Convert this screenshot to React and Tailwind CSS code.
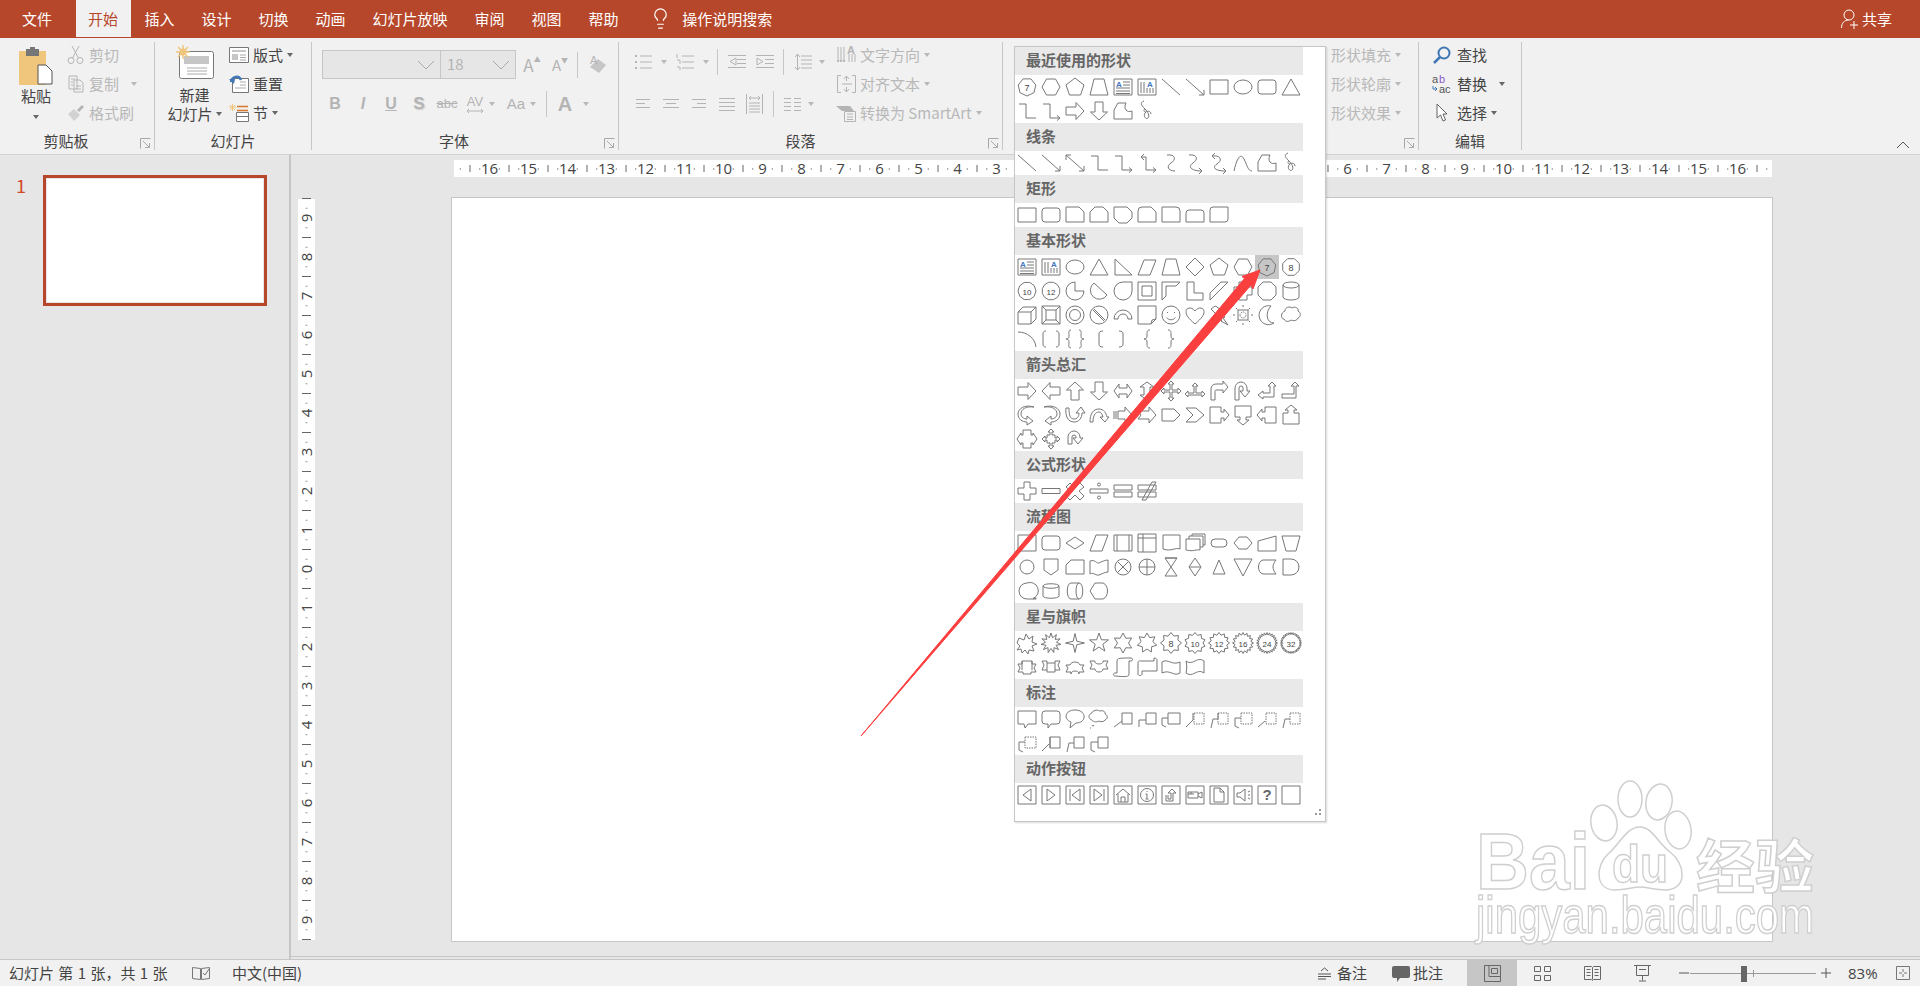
import React from "react";
import { Lightbulb } from "lucide-react";

// regular polygon / star paths for the shape gallery
const pt = (a, r) => `${(12 + r * Math.sin(a)).toFixed(2)} ${(12 - r * Math.cos(a)).toFixed(2)}`;
const reg = (n, R = 9) =>
  "M" + Array.from({ length: n }, (_, i) => pt(((i + 0.5) * 2 * Math.PI) / n, R)).join("L") + "z";
const star = (n, R = 9.5, r = 6) =>
  "M" +
  Array.from({ length: n * 2 }, (_, i) => pt((i * Math.PI) / n, i % 2 ? r : R)).join("L") +
  "z";

const ELL = "M3 12a9 7 0 1 0 18 0a9 7 0 1 0-18 0z";
const RECT = "M3 5h18v14H3z";
const RND = "M6 5h12a3 3 0 0 1 3 3v8a3 3 0 0 1-3 3H6a3 3 0 0 1-3-3V8a3 3 0 0 1 3-3z";
const TRI = "M12 4L21 20H3z";
const HEX = "M3 12L7.5 4h9L21 12l-4.5 8h-9z";
const PENT = "M12 3L21 10l-3.5 10h-11L3 10z";
const TRAP = "M3 20L7 4h10l4 16z";
const LINE = "M3 4L21 20";
const LINEA = "M3 4L21 20M21 15v5h-5";
const LINEB = "M3 4L21 20M21 15v5h-5M3 9V4h5";
const ELB = "M4 5h7v14h10";
const ELBA = "M4 5h7v14h10M18 16.5l3 2.500-3 2.500";
const ELBB = "M6 6h5v13h10M18 16.500l3 2.500-3 2.500M9 3L6 6l3 3";
const CUR = "M8 4c9-1 9 5 4 8s-3 8 4 8";
const CURA = "M6 4c9-1 9 5 4 8s-3 8 9 8M16 17l3 3-3 3";
const CURB = "M5 5c10-1 10 5 5 8s-3 7 9 7M16 17l3 3-3 3M8 2L5 5l3 3";
const WAVE = "M3 20C6 6 10 2 13 8s4 12 8 12";
const FREE = "M3 11L7 4h8c-3 6 1 10 6 8v8H3z";
const SCR = "M9 2c-5 2-2 5 1 8s5 7 3 9-5-2-3-5 6-2 6 1M10 10c-2 1-1 3 1 3";
const TB = { d: "M3 4h18v16H3zM12 7h7M12 10h7M5 13h14M5 16h14M5 18.500h14", a: [5, 11.500] };
const VTB = { d: "M3 4h18v16H3zM6 7v11M9 7v11M12 13v5M15 13v5M18 13v5", a: [12, 11.500] };
const ARW = {
  r: "M3 8h10V3.500L21 12l-8 8.500V16H3z",
  l: "M21 8H11V3.500L3 12l8 8.500V16h10z",
  u: "M8 21V11H3.500L12 3l8.500 8H16v10z",
  d: "M8 3v10H3.500L12 21l8.500-8H16V3z",
};
const RBOX = "M3 3h18v18H3z";

const RECENT = [
  { d: reg(7), t: "7" }, HEX, PENT, TRAP, TB, VTB, LINE, LINEA, RECT, ELL, RND, TRI,
  ELB, ELBA, ARW.r, ARW.d, FREE, SCR,
];
const LINES = [LINE, LINEA, LINEB, ELB, ELBA, ELBB, CUR, CURA, CURB, WAVE, FREE, SCR];
const RECTS = [
  RECT, RND, "M3 4h13l5 5v10H3z", "M8 4h8l5 5v10H3V9z", "M3 4h13l5 5v6l-5 5H8l-5-5z",
  "M3 19V8a4 4 0 0 1 4-4h9l5 5v10z", "M3 4h14a4 4 0 0 1 4 4v11H3z",
  "M6 7h12a3 3 0 0 1 3 3v9H3v-9a3 3 0 0 1 3-3z", "M3 19V7a3 3 0 0 1 3-3h15v12a3 3 0 0 1-3 3z",
];
const BASIC = [
  TB, VTB, ELL, TRI, "M4 4v16h17z", "M3 20L9 5h12l-6 15z", TRAP, "M12 3l9 9-9 9-9-9z", PENT, HEX,
  { d: reg(7), t: "7", hot: true }, { d: reg(8), t: "8" },
  { d: reg(10), t: "10" }, { d: reg(12), t: "12" }, "M12 3a9 9 0 1 0 9 9h-9z", "M7 4a9 9 0 1 0 13 12z",
  "M12 3h9v9a9 9 0 1 1-9-9z", "M3 3h18v18H3zM7 7h10v10H7z", "M3 21V3h18l-4 4H7v10z", "M4 3h7v11h9v7H4z",
  "M3 21v-7L14 3h7z", "M8 3h8v5h5v8h-5v5H8v-5H3V8h5z", "M8 3h8l5 5v8l-5 5H8l-5-5V8z",
  "M4 6a8 3 0 0 1 16 0v12a8 3 0 0 1-16 0zM4 6a8 3 0 0 0 16 0",
  "M3 9l5-5h13v12l-5 5H3zM3 9h13v12M16 9l5-5", "M3 3h18v18H3zM7 7h10v10H7zM3 3l4 4M21 3l-4 4M3 21l4-4M21 21l-4-4",
  "M3 12a9 9 0 1 0 18 0a9 9 0 1 0-18 0zM6.500 12a5.500 5.500 0 1 0 11 0a5.500 5.500 0 1 0-11 0z",
  "M3 12a9 9 0 1 0 18 0a9 9 0 1 0-18 0zM6 7l11 11M7 6l11 11", "M3 16a9 9 0 0 1 18 0h-4a5 5 0 0 0-10 0z",
  "M3 3h18v13l-5 5H3zM16 21l1-4 4-1",
  "M3 12a9 9 0 1 0 18 0a9 9 0 1 0-18 0zM8 9.500h1M15 9.500h1M7.500 14.500c2 3 7 3 9 0",
  "M12 21C5 15 3 12 3 8.500 3 5 8 3 12 8c4-5 9-3 9 .5 0 3.500-2 6.500-9 12.500z",
  "M8 3l-4 3 5 5-2 1 8 5-1 1 7 4-5-7 2-1-6-6 2-1-4-3z",
  { d: "M7 7h10v10H7zM12 2v2M12 20v2M2 12h2M20 12h2M5 5l1.500 1.500M17.500 17.500L19 19M5 19l1.500-1.500M17.500 6.500L19 5", dash: "M9 12a3 3 0 1 0 6 0a3 3 0 1 0-6 0z" },
  "M16 3a9.500 9.500 0 1 0 3 17c-8 0-9-11-3-17z",
  "M6 8c0-4 5-5 7-3 3-2 7 0 6 3 3 1 3 6 0 7-1 3-5 3-7 2-2 2-6 2-7-1-3 0-4-6 1-8z",
  "M3 5c9 0 17 6 18 15", "M7 4c-2 0-3 1-3 3v10c0 2 1 3 3 3M17 4c2 0 3 1 3 3v10c0 2-1 3-3 3",
  "M8 3c-3 0-2 3-2 5s0 4-3 4c3 0 3 2 3 4s-1 5 2 5M16 3c3 0 2 3 2 5s0 4 3 4c-3 0-3 2-3 4s1 5-2 5",
  "M16 4c-3 0-4 1-4 3v10c0 2 1 3 4 3", "M8 4c3 0 4 1 4 3v10c0 2-1 3-4 3",
  "M15 3c-3 0-3 2-3 4v2c0 2-1 3-3 3 2 0 3 1 3 3v2c0 2 0 4 3 4", "M9 3c3 0 3 2 3 4v2c0 2 1 3 3 3-2 0-3 1-3 3v2c0 2 0 4-3 4",
];
const ARROWS = [
  ARW.r, ARW.l, ARW.u, ARW.d, "M3 12l5-7v4h8V5l5 7-5 7v-4H8v4z", "M12 3l7 5h-4v8h4l-7 5-7-5h4V8H5z",
  "M12 2l3 3h-2v6h6V9l3 3-3 3v-2h-6v6h2l-3 3-3-3h2v-6H5v2l-3-3 3-3v2h6V5H9z",
  "M12 4l3 3h-2v7h6v-2l3 3-3 3v-2H5v2l-3-3 3-3v2h6V7H9z", "M4 21V10c0-3 2-5 5-5h7V2l5 6-5 6v-3H9c-1 0-1 1-1 2v8z",
  "M4 21V9a6 6 0 0 1 12 0v3h3l-5 6-5-6h3V9a2 2 0 0 0-4 0v12z", "M3 16l5-4v2h7V7h-2l4-4 4 4h-2v11H8v2z",
  "M3 15h12V7h-3l4-4 4 4h-3v12H3z",
  "M19 4c-8-1-13 2-13 7 0 3 3 5 6 5v-3l6 5-6 4v-3C7 19 3 16 3 11S9 1 19 4z",
  "M5 4c8-1 13 2 13 7 0 3-3 5-6 5v-3l-6 5 6 4v-3c5 0 9-3 9-8S15 1 5 4z",
  "M3 5c-1 8 2 14 8 14 5 0 8-4 8-9h3l-4-6-5 6h3c0 4-2 6-5 6-4 0-5-4-5-11z",
  "M3 19c0-8 3-13 9-13 5 0 7 4 8 8h2l-4 5-5-5h3c-1-3-2-5-4-5-4 0-6 4-6 10z",
  "M3 8v8M5 8v8M7 8h7V4l7 8-7 8v-4H7z", "M3 8h11V4l7 8-7 8v-4H3l3-4z", "M3 6h12l6 6-6 6H3z", "M3 5h10l8 7-8 7H3l7-7z",
  "M3 4h11v5h3V6l5 6-5 6v-3h-3v5H3z", "M4 3h16v11h-5v3h3l-6 5-6-5h3v-3H4z", "M21 4H10v5H7V6l-5 6 5 6v-3h3v5h11z", "M4 21h16V10h-5V7h3l-6-5-6 5h3v3H4z",
  "M8 3h8v5h2V6l4 6-4 6v-2h-2v5H8v-5H6v2l-4-6 4-6v2h2z", "M12 2l3 3h-2v3h3v3h2V9l3 3-3 3v-2h-2v3h-3v3h2l-3 3-3-3h2v-3H8v-3H6v2l-3-3 3-3v2h2V8h3V5H9z",
  "M5 17V10a6 6 0 0 1 12 0v1h3l-5 6-5-6h3v-1a2 2 0 0 0-4 0v7z",
];
const MATH = [
  "M9 3h6v6h6v6h-6v6H9v-6H3V9h6z", "M3 9.500h18v5H3z", "M7 4l5 5 5-5 4 4-5 4 5 5-4 4-5-5-5 5-4-4 5-5-5-4z",
  "M3 10h18v4H3zM10.500 5.500a1.500 1.500 0 1 0 3 0a1.500 1.500 0 1 0-3 0zM10.500 18.500a1.500 1.500 0 1 0 3 0a1.500 1.500 0 1 0-3 0z",
  "M3 6h18v5H3zM3 13h18v5H3z", "M3 6h18v5H3zM3 13h18v5H3zM7 21L17 3h4L11 21z",
];
const FLOW = [
  "M3 4h18v16H3z", RND, "M12 6l9 6-9 6-9-6z", "M3 20L9 4h12l-6 16z", "M3 4h18v16H3zM6 4v16M18 4v16", "M3 3h18v18H3zM8 3v18M3 7h18",
  "M4 4h17v14c-5-2-8 3-17 0z", "M3 8h14v11c-4-1-6 2-14 0zM6 8V5h14v11h-3M9 5V3h13v11h-2", "M8 8h8a4 4 0 0 1 0 8H8a4 4 0 0 1 0-8z", "M3 12l5-6h8l5 6-5 6H8z", "M3 10l18-5v15H3z", "M3 5h18l-4 15H7z",
  "M5 12a7 7 0 1 0 14 0a7 7 0 1 0-14 0z", "M5 4h14v11l-7 5-7-5z", "M8 5h13v14H3V10z", "M3 6c5-2 7 3 9 2s6-3 9-3v12c-3 0-6 2-9 3s-5-3-9-1z", "M4 12a8 8 0 1 0 16 0a8 8 0 1 0-16 0zM6.500 6.500l11 11M17.500 6.500l-11 11", "M4 12a8 8 0 1 0 16 0a8 8 0 1 0-16 0zM12 4v16M4 12h16",
  "M6 3h12L6 21h12z M6 3h12", "M12 3l6 9-6 9-6-9zM6 12h12", "M12 5l6 14H6z", "M3 4h18l-9 17z", "M8 5h13c-4 5-4 9 0 14H8c-6-1-6-13 0-14z", "M4 4h8a8 8 0 0 1 0 16H4z",
  "M12 4a8 8 0 1 0 0 16h9v-1l-3 .5a8 8 0 0 0-6-15.500z", "M4 7c0-3 16-3 16 0v10c0 3-16 3-16 0zM4 7c0 3 16 3 16 0", "M8 4h8c5 0 5 16 0 16H8C3 20 3 4 8 4zM16 4c-4 0-4 16 0 16", "M3 12l5-8h8c6 2 6 14 0 16H8z",
];
const STARS = [
  "M4 7l5 2 2-6 3 5 4-3-1 6 5 2-5 2 2 5-5-1-1 4-3-4-3 3-1-4-4 1 3-4-3-3z", star(11, 10, 5.500), star(4, 9.500, 2.500), star(5, 10, 4), star(6, 10, 5.500), star(7, 10, 6),
  { d: star(8, 10.500, 7.500), t: "8" }, { d: star(10, 10.500, 8), t: "10" }, { d: star(12, 10.500, 8), t: "12" }, { d: star(16, 10.500, 8), t: "16" }, { d: star(24, 10.500, 8), t: "24" }, { d: star(32, 10.500, 8.500), t: "32" },
  "M3 9h4V6h10v3h4l-2 4 2 4h-5v2H8v-2H3l2-4zM7 6v9M17 6v9", "M3 6h5v2h8V6h5l-2 4 2 5h-5v2H8v-2H3l2-5zM8 8v7M16 8v7", "M3 17l2-4-2-3h4c1-4 9-4 10 0h4l-2 3 2 4h-5v2c0-4-8-4-8 0v-2z", "M3 6l2 4-2 4h5c0 4 8 4 8 0h5l-2-4 2-4h-5c1 4-9 4-8 0z",
  "M6 6c0-3 3-3 14-3 2 0 2 3 0 3h-2v13c0 3-3 3-14 2-2 0-2-3 0-3h2z", "M3 8c0-3 3-2 3-2h13V3c2 0 3 1 3 2v11H7v3c0 2-4 2-4 0z", "M3 7c6-4 10 4 18 0v11c-6 4-10-4-18 0z", "M3 6c3 2 5 2 9 0s6-2 9 0v12c-3-2-5-2-9 0s-6 2-9 0c1-4 1-8 0-12z",
];
const CALL = [
  "M3 4h18v13h-8l-3 4-1-4H3z", "M6 4h12a3 3 0 0 1 3 3v7a3 3 0 0 1-3 3h-6l-3 4v-4H6a3 3 0 0 1-3-3V7a3 3 0 0 1 3-3z", "M12 3c12 0 12 13 1 13l-6 5 1-6C0 12 2 3 12 3z",
  { d: "M7 4c3-2 5 0 6 0 3-1 6 1 5 3 3 1 3 5 0 6-1 2-5 2-6 1-3 2-7 0-7-1-4-1-4-6 0-7 0-1 1-2 2-2zM5 18a1 1 0 1 0 2 0M3 21h1" },
  "M11 6h10v11H11zM3 20l8-6", "M11 6h10v11H11zM4 20v-7h7", "M9 6h12v11H9zM3 11h6M3 11v7l4 2",
  { d: "M3 20l7-7V6", dash: "M11 6h10v11H11z" }, { d: "M4 21l2-9h5V6", dash: "M11 6h10v11H11z" }, { d: "M4 11v8l4 2M4 11h6", dash: "M10 6h11v11H10z" }, { d: "M3 20l7-6", dash: "M11 6h10v11H11z" }, { d: "M4 21l2-9h5", dash: "M11 6h10v11H11z" },
  { d: "M4 11v8l4 2M4 11h6", dash: "M10 6h11v11H10z" }, "M3 20l7-7M11 6v11M11 6h10v11H11z", "M4 21l2-9h5M11 6h10v11H11z", "M4 11v8l4 2M4 11h7M11 6h10v11H11z",
];
const ACTION = [
  RBOX + "M16 6v12L8 12z", RBOX + "M8 6v12l8-6z", RBOX + "M17 6v12L9 12zM7 6v12", RBOX + "M7 6v12l8-6zM17 6v12",
  RBOX + "M5 12l7-6 7 6M7 11v8h10v-8M10 19v-5h4v5", RBOX + "M5.500 12a6.500 6.500 0 1 0 13 0a6.500 6.500 0 1 0-13 0zM12 8v1M10.500 11H12v5M10.500 16h3",
  RBOX + "M7 12v6h7v-8h3l-4-4-4 4h3v6h-3v-4", RBOX + "M5 9h10v6H5zM15 11l4-2v6l-4-2M5 11h6M8 9v2",
  RBOX + "M7 5h6l4 4v10H7zM13 5v4h4", RBOX + "M6 10v4h3l5 4V6l-5 4zM17 9l2-1M17 15l2 1M17 12h2",
  { d: RBOX, q: true }, RBOX,
];

const SECTIONS = [
  ["最近使用的形状", RECENT], ["线条", LINES], ["矩形", RECTS], ["基本形状", BASIC], ["箭头总汇", ARROWS],
  ["公式形状", MATH], ["流程图", FLOW], ["星与旗帜", STARS], ["标注", CALL], ["动作按钮", ACTION],
];

function Shape({ s }) {
  const o = typeof s === "string" ? { d: s } : s;
  return (
    <div className={`h-6 w-6 ${o.hot ? "bg-[#c6c6c6]" : ""}`}>
      <svg width="24" height="24" viewBox="0 0 24 24" fill="none" stroke="#777" strokeWidth="1">
        <path d={o.d} />
        {o.dash && <path d={o.dash} strokeDasharray="1.500 1" />}
        {o.t && (
          <text x="12" y="15.500" textAnchor="middle" fontSize={o.t.length > 1 ? 8 : 9} fill="#444" stroke="none" fontFamily="Liberation Sans">
            {o.t}
          </text>
        )}
        {o.a && (
          <text x={o.a[0]} y={o.a[1]} fontSize="8" fontWeight="700" fill="#3f78c0" stroke="none" fontFamily="Liberation Sans">
            A
          </text>
        )}
        {o.q && (
          <text x="12" y="17" textAnchor="middle" fontSize="15" fontWeight="700" fill="#666" stroke="none" fontFamily="Liberation Sans">
            ?
          </text>
        )}
      </svg>
    </div>
  );
}

function Caret({ off }) {
  return (
    <span
      className={`inline-block h-0 w-0 shrink-0 border-x-[3.5px] border-t-[4px] border-x-transparent ${
        off ? "border-t-[#b8b8b8]" : "border-t-[#666]"
      }`}
    />
  );
}

const Sep = () => <div className="h-[26px] w-px shrink-0 bg-[#c6c6c6]" />;

function Launcher() {
  return (
    <svg className="absolute bottom-0 right-[3px]" width="11" height="11" viewBox="0 0 11 11" fill="none" stroke="#a8a8a8">
      <path d="M.5 10.500v-10h10M3 3l6 6M5 9.500h4.500V5" />
    </svg>
  );
}

function Group({ width, label, launcher, labelPad = "", children }) {
  return (
    <div className={`flex shrink-0 flex-col border-r border-[#c6c6c6] ${width}`}>
      <div className="h-[91px]">{children}</div>
      <div className={`relative flex h-[16px] items-center justify-center pb-[2px] text-[15px] leading-none text-[#444] ${labelPad}`}>
        {label}
        {launcher && <Launcher />}
      </div>
    </div>
  );
}

// one of the stacked small buttons in a ribbon group
function Row({ icon, text, caret, off, gap = "", iconBox = "w-[20px]" }) {
  return (
    <div className={`flex h-[29px] items-center text-[15px] leading-none ${off ? "text-[#b8b8b8]" : "text-[#444]"}`}>
      <span className={`flex shrink-0 justify-center ${iconBox}`}>{icon}</span>
      <span className="ml-[4px] whitespace-nowrap pb-[1px]">{text}</span>
      {caret && (
        <span className={`flex ${gap || "ml-[4px]"}`}>
          <Caret off={off} />
        </span>
      )}
    </div>
  );
}

const G = "#b4b4b4";
const Svg = ({ w = 18, h = 18, children, stroke = G }) => (
  <svg width={w} height={h} viewBox={`0 0 ${w} ${h}`} fill="none" stroke={stroke} className="shrink-0">
    {children}
  </svg>
);

function Ribbon() {
  return (
    <div className="flex h-[117px] shrink-0 border-b border-[#d2d2d2] bg-[#f1f1f1] pb-[4px] pt-[4px]">
      <Group width="w-[155px]" label="剪贴板" launcher labelPad="pr-[22px]">
        <div className="flex">
          <div className="flex w-[66px] flex-col items-center pl-[6px] text-[15px] leading-none text-[#444]">
            <svg className="mt-[5px]" width="36" height="38" viewBox="0 0 36 38">
              <rect x="1" y="4" width="27" height="34" fill="#efc67c" />
              <rect x="8" y="2" width="13" height="7" fill="#777" />
              <rect x="12" y="0" width="5" height="4" fill="#777" />
              <path d="M20 18h8l6 6v13H20z" fill="#fff" stroke="#555" />
            </svg>
            <div className="mt-[3px]">粘贴</div>
            <div className="mt-[12px] flex">
              <Caret />
            </div>
          </div>
          <div className="-mt-[2px]">
            <Row
              off
              iconBox="w-[19px]"
              text="剪切"
              icon={
                <Svg w={17} h={20}>
                  <circle cx="4" cy="15.500" r="3" />
                  <circle cx="13" cy="15.500" r="3" />
                  <path d="M5.500 13L12 1M11.500 13L5 1" />
                </Svg>
              }
            />
            <Row
              off
              iconBox="w-[19px]"
              text="复制"
              caret
              gap="ml-[12px]"
              icon={
                <Svg w={16} h={18}>
                  <path d="M1 1h8v13H1zM6 5h6l3 3v9H6zM3 4h4M3 7h2M3 10h2M8 11h5M8 14h5" />
                </Svg>
              }
            />
            <Row
              off
              iconBox="w-[19px]"
              text="格式刷"
              icon={
                <svg width="18" height="18" viewBox="0 0 18 18" className="shrink-0">
                  <path d="M1 10l6-5 6 6-6 6z" fill="#d2d2d2" />
                  <path d="M10 6l5-5 2 2-5 5z" fill="#b4b4b4" />
                </svg>
              }
            />
          </div>
        </div>
      </Group>

      <Group width="w-[157px]" label="幻灯片">
        <div className="flex">
          <div className="flex w-[74px] flex-col items-center pl-[5px] text-[15px] leading-none text-[#444]">
            <svg className="mt-[3px]" width="38" height="35" viewBox="0 0 38 35" fill="none">
              <rect x="3.500" y="6.500" width="34" height="27" rx="2" fill="#fff" stroke="#777" />
              <rect x="8" y="11" width="25" height="8" fill="#c6c6c6" />
              <path d="M11 23h20M11 26h20M11 29h20" stroke="#aaa" />
              <path d="M7 0v14M0 7h14M2 2l10 10M12 2L2 12" stroke="#efc67c" strokeWidth="1.500" />
              <circle cx="7" cy="7" r="3.500" fill="#efc67c" />
            </svg>
            <div className="mt-[7px]">新建</div>
            <div className="mt-[4px] flex items-center whitespace-nowrap">
              幻灯片
              <span className="ml-[3px] flex">
                <Caret />
              </span>
            </div>
          </div>
          <div className="-mt-[2px]">
            <Row
              text="版式"
              caret
              icon={
                <Svg w={20} h={16} stroke="#777">
                  <path d="M.5.500h19v15H.5z" fill="#fff" />
                  <path d="M3 3h14v2H3zM3 7h6v6H3z" fill="#c6c6c6" stroke="none" />
                  <path d="M11 8h6M11 10.500h6M11 13h6" stroke="#aaa" />
                </Svg>
              }
            />
            <Row
              text="重置"
              icon={
                <svg width="20" height="18" viewBox="0 0 20 18" fill="none" className="shrink-0">
                  <path d="M3.500 3.500h16v14h-16z" fill="#fff" stroke="#777" />
                  <path d="M11 7h6M11 10h6M6 13h11" stroke="#aaa" />
                  <path d="M2 7C3 1 10 0 12 5" stroke="#3f78b5" strokeWidth="2.500" />
                  <path d="M0 4l5 5 1-5z" fill="#3f78b5" />
                </svg>
              }
            />
            <Row
              text="节"
              caret
              icon={
                <svg width="20" height="18" viewBox="0 0 20 18" fill="none" className="shrink-0">
                  <path d="M0 3h7M3.500 0v7M1 1l5 5M6 1L1 6" stroke="#efc67c" />
                  <path d="M8 2.500h11M8 6.500h11" stroke="#d9772b" strokeWidth="1.500" />
                  <path d="M7.500 8.500h12v9h-12z" stroke="#777" fill="#fff" />
                  <path d="M7.500 12.500h12" stroke="#777" />
                </svg>
              }
            />
          </div>
        </div>
      </Group>

      <Group width="w-[307px]" label="字体" launcher labelPad="pr-[22px]">
        <div className="flex flex-col">
          <div className="flex items-center pl-[10px] pt-[8px]">
            <div className="flex h-[29px] w-[119px] items-center justify-end border border-[#c6c6c6] bg-[#e6e6e6] pr-[5px]">
              <Chevron />
            </div>
            <div className="flex h-[29px] w-[75px] items-center justify-between border border-l-0 border-[#c6c6c6] bg-[#e6e6e6] pl-[6px] pr-[5px] text-[15px] text-[#b4b4b4]">
              18
              <Chevron />
            </div>
            <span className="ml-[8px] flex w-[16px] items-start justify-center text-[17px] leading-none text-[#b4b4b4]">A<em className="text-[7px] not-italic">▲</em></span>
            <span className="ml-[12px] flex w-[16px] items-start justify-center text-[15px] leading-none text-[#b4b4b4]">A<em className="text-[7px] not-italic">▼</em></span>
            <div className="ml-[9px]">
              <Sep />
            </div>
            <svg className="ml-[11px]" width="18" height="20" viewBox="0 0 18 20">
              <path d="M1 12l8-8 8 6-7 8z" fill="#c6c6c6" />
              <text x="1" y="9" fontSize="11" fill="#b4b4b4" fontFamily="Liberation Sans">A</text>
            </svg>
          </div>
          <div className="mt-[12px] flex h-[26px] items-center pl-[9px] font-['Liberation_Sans',sans-serif] text-[#b4b4b4]">
            <span className="w-[28px] text-center text-[16px] font-bold">B</span>
            <span className="w-[28px] text-center text-[16px] font-bold italic">I</span>
            <span className="w-[28px] text-center text-[16px] font-bold underline">U</span>
            <span className="w-[28px] text-center text-[17px] font-bold [text-shadow:1px_1px_1px_#ccc]">S</span>
            <span className="w-[28px] text-center text-[13px] line-through">abc</span>
            <span className="flex w-[28px] flex-col items-center text-[13px] leading-[13px]">
              AV
              <svg width="18" height="6" viewBox="0 0 18 6" fill="none" stroke="#b4b4b4">
                <path d="M1 3h16M3 1L1 3l2 2M15 1l2 2-2 2" />
              </svg>
            </span>
            <Caret off />
            <span className="ml-[7px] w-[28px] text-center text-[15px]">Aa</span>
            <Caret off />
            <div className="ml-[10px]">
              <Sep />
            </div>
            <span className="ml-[7px] w-[22px] text-center text-[20px] font-bold leading-none">A</span>
            <span className="ml-[7px] flex">
              <Caret off />
            </span>
          </div>
        </div>
      </Group>

      <Group width="w-[384px]" label="段落" launcher labelPad="pr-[20px]">
        <div className="flex">
          <div className="w-[217px]">
            <div className="mt-[7px] flex h-[26px] items-center pl-[15px]">
              <Svg><path d="M6 3h12M6 9h12M6 15h12" /><path d="M1 3h2M1 9h2M1 15h2" strokeWidth="2" /></Svg>
              <span className="ml-[9px] flex"><Caret off /></span>
              <span className="ml-[9px]"><Svg><path d="M6 3h12M6 9h12M6 15h12M1 1v4M1 7h3v4M1 14h3v3" /></Svg></span>
              <span className="ml-[9px] flex"><Caret off /></span>
              <div className="ml-[8px]"><Sep /></div>
              <span className="ml-[10px]"><Svg><path d="M0 2.500h18M9 6.500h9M9 10.500h9M0 14.500h18M8 5L2 8.500 8 12z" /></Svg></span>
              <span className="ml-[10px]"><Svg><path d="M0 2.500h18M0 14.500h18M9 6.500h9M9 10.500h9M1 5l6 3.500L1 12z" /></Svg></span>
              <div className="ml-[9px]"><Sep /></div>
              <span className="ml-[10px]"><Svg><path d="M7 3h11M7 7h11M7 11h11M7 15h11M3.500 1v16M1 4l2.500-3L6 4M1 14l2.500 3L6 14" /></Svg></span>
              <span className="ml-[7px] flex"><Caret off /></span>
            </div>
            <div className="mt-[16px] flex h-[26px] items-center pl-[17px]">
              <Svg w={14} h={14}><path d="M0 2.500h14M0 6.500h9M0 10.500h14" /></Svg>
              <span className="ml-[13px]"><Svg w={16} h={14}><path d="M0 2.500h16M3 6.500h10M0 10.500h16" /></Svg></span>
              <span className="ml-[13px]"><Svg w={14} h={14}><path d="M0 2.500h14M5 6.500h9M0 10.500h14" /></Svg></span>
              <span className="ml-[13px]"><Svg w={16} h={14}><path d="M0 1.500h16M0 5.500h16M0 9.500h16M0 13.500h16" /></Svg></span>
              <span className="ml-[11px]"><Svg w={17} h={20}><path d="M.5 0v20M16.500 0v20M3 4h11M5 2L3 4l2 2M12 2l2 2-2 2M3 9h11M3 12h11M3 15h11M3 18h11" /></Svg></span>
              <div className="ml-[10px]"><Sep /></div>
              <span className="ml-[10px]"><Svg w={17} h={14}><path d="M0 1.500h7M10 1.500h7M0 5.500h7M10 5.500h7M0 9.500h7M10 9.500h7M0 13.500h7M10 13.500h7" /></Svg></span>
              <span className="ml-[7px] flex"><Caret off /></span>
            </div>
          </div>
          <div className="-mt-[2px]">
            <Row
              off
              text="文字方向"
              caret
              icon={
                <Svg w={19} h={20}>
                  <path d="M1 2v15M4 2v15M7 2v15M0 15l1 2 1-2M3 15l1 2 1-2M6 15l1 2 1-2M12 9v8M15 9v8M18 9v8" />
                  <text x="10" y="9" fontSize="11" fontWeight="700" fill={G} stroke="none" fontFamily="Liberation Sans">A</text>
                </Svg>
              }
            />
            <Row
              off
              text="对齐文本"
              caret
              icon={
                <Svg w={19} h={18}>
                  <path d="M4 .5H.5v17H4M15 .5h3.500v17H15M9.500 1v5M7 4l2.500-3L12 4M9.500 17v-5M7 14l2.500 3L12 14M5 9h10" />
                </Svg>
              }
            />
            <Row
              off
              text="转换为 SmartArt"
              caret
              icon={
                <svg width="20" height="18" viewBox="0 0 20 18" fill="none" className="shrink-0">
                  <path d="M0 2h14l4 5H6z" fill="#b4b4b4" />
                  <path d="M8.500 7.500h11v10h-11zM11 10h6M11 13h6M11 15.500h6" stroke="#b4b4b4" />
                </svg>
              }
            />
          </div>
        </div>
      </Group>

      <Group width="w-[416px]" label="绘图" launcher>
        <div className="-mt-[2px] flex flex-col items-end pr-[17px]">
          <Row off text="形状填充" caret iconBox="w-0" />
          <Row off text="形状轮廓" caret iconBox="w-0" />
          <Row off text="形状效果" caret iconBox="w-0" />
        </div>
      </Group>

      <Group width="w-[103px]" label="编辑">
        <div className="-mt-[2px] pl-[12px]">
          <Row
            iconBox="w-[22px]"
            text="查找"
            icon={
              <svg width="18" height="18" viewBox="0 0 18 18" fill="none" stroke="#3f78b5" className="shrink-0">
                <circle cx="11" cy="7" r="5.500" strokeWidth="2" />
                <path d="M7 11l-6 6" strokeWidth="2.500" />
              </svg>
            }
          />
          <div className="flex items-center">
            <Row
              iconBox="w-[22px]"
              text="替换"
              icon={
                <svg width="22" height="20" viewBox="0 0 22 20" className="shrink-0" fontFamily="Liberation Sans" fontSize="11">
                  <text x="1" y="9" fill="#555">a</text>
                  <text x="8" y="9" fill="#8e5cc0">b</text>
                  <path d="M2 12v3h4M4 13l2 2-2 2" stroke="#3f78b5" fill="none" />
                  <text x="8" y="19" fill="#555">ac</text>
                </svg>
              }
            />
            <span className="ml-[12px] flex">
              <Caret />
            </span>
          </div>
          <Row
            iconBox="w-[22px]"
            text="选择"
            caret
            icon={
              <svg width="12" height="19" viewBox="0 0 12 19" fill="#fff" stroke="#666" className="shrink-0">
                <path d="M1 1v14l3.500-3 2.500 6 2.500-1-2.500-6H11z" />
              </svg>
            }
          />
        </div>
      </Group>

      <div className="flex flex-1 items-end justify-end pb-[1px] pr-[10px]">
        <svg width="14" height="8" viewBox="0 0 14 8" fill="none" stroke="#555">
          <path d="M1 7l6-6 6 6" />
        </svg>
      </div>
    </div>
  );
}

const Chevron = () => (
  <svg width="18" height="10" viewBox="0 0 18 10" fill="none" stroke="#a8a8a8">
    <path d="M1 1l8 8 8-8" />
  </svg>
);

function HRuler() {
  const ticks = [];
  for (let i = -67; i <= 67; i++) {
    const x = 659.5 + i * 9.75;
    if (i % 4 === 0) {
      ticks.push(<text key={i} x={x} y="14" textAnchor="middle" fontSize="15" fill="#444">{Math.abs(i / 4)}</text>);
    } else if (i % 2 === 0) {
      ticks.push(<path key={i} d={`M${x} 5v7`} stroke="#666" />);
    } else {
      ticks.push(<path key={i} d={`M${x} 8v2`} stroke="#999" />);
    }
  }
  return (
    <svg width="1318" height="17" className="block overflow-visible bg-white" fontFamily="Open Sans">
      {ticks}
    </svg>
  );
}

function VRuler() {
  const ticks = [];
  for (let i = -38; i <= 38; i++) {
    const y = 370 + i * 9.75;
    if (i % 4 === 0) {
      ticks.push(<text key={i} x="8.500" y={y} transform={`rotate(-90 8.500 ${y})`} dy="5" textAnchor="middle" fontSize="15" fill="#444">{Math.abs(i / 4)}</text>);
    } else if (i % 2 === 0) {
      ticks.push(<path key={i} d={`M4 ${y}h9`} stroke="#666" />);
    } else {
      ticks.push(<path key={i} d={`M7.500 ${y}h2`} stroke="#999" />);
    }
  }
  return (
    <svg width="17" height="741" className="mt-[2px] block shrink-0 overflow-visible bg-white" fontFamily="Open Sans">
      {ticks}
    </svg>
  );
}

function ShapesPopup() {
  return (
    <div className="absolute left-[1014px] top-[46px] h-[776px] w-[312px] border border-[#c6c6c6] bg-white shadow-[1px_1px_2px_rgba(0,0,0,0.15)]">
      {SECTIONS.map(([title, list]) => (
        <div key={title} className="w-[288px]">
          <div className="flex h-[28px] items-center bg-[#e9e9e9] pb-[3px] pl-[11px] text-[15px] font-bold leading-none text-[#666]">
            {title}
          </div>
          <div className="grid grid-cols-12">
            {list.map((s, i) => (
              <Shape key={i} s={s} />
            ))}
          </div>
        </div>
      ))}
      <svg className="absolute bottom-[3px] right-[3px]" width="10" height="10" fill="#999">
        <path d="M7 1h2v2H7zM3 5h2v2H3zM7 5h2v2H7z" />
      </svg>
    </div>
  );
}

function RedArrow() {
  return (
    <svg className="pointer-events-none absolute left-0 top-0" width="1920" height="986">
      <path d="M1260 270L1242 276.500L1244.500 278.500L861 736L1251 285L1253 289z" fill="#fb3e3e" stroke="#fb3e3e" strokeWidth="1" strokeLinejoin="round" />
    </svg>
  );
}

function Watermark() {
  const ink = { fill: "#fff", stroke: "#cfcfcf", strokeWidth: 1.5 };
  return (
    <svg className="pointer-events-none absolute left-[1470px] top-[775px] blur-[0.4px]" width="350" height="175" viewBox="1470 775 350 175" fontFamily="Liberation Sans">
      <ellipse cx="1604" cy="823" rx="13" ry="18" transform="rotate(-10 1604 823)" {...ink} />
      <ellipse cx="1630" cy="799" rx="12" ry="18" {...ink} />
      <ellipse cx="1659" cy="802" rx="13" ry="18" transform="rotate(10 1659 802)" {...ink} />
      <ellipse cx="1678" cy="830" rx="13" ry="19" transform="rotate(-8 1678 830)" {...ink} />
      <path d="M1640 827c12 0 18 16 30 25 16 12 18 38-5 38-10 0-18-3-25-3s-15 3-25 3c-20 0-20-24-7-36 12-10 18-27 32-27z" {...ink} />
      <text x="1612" y="882" fontSize="52" textLength="56" lengthAdjust="spacingAndGlyphs" fontWeight="700" {...ink}>du</text>
      <text x="1476" y="889" fontSize="80" textLength="114" lengthAdjust="spacingAndGlyphs" fontWeight="700" {...ink}>Bai</text>
      <text x="1696" y="888" fontSize="58" textLength="118" lengthAdjust="spacingAndGlyphs" fontWeight="700" fontFamily="Noto Sans CJK SC" {...ink}>经验</text>
      <text x="1476" y="933" fontSize="52" textLength="338" lengthAdjust="spacingAndGlyphs" {...ink}>jingyan.baidu.com</text>
    </svg>
  );
}

function StatusBar() {
  return (
    <div className="flex h-[27px] shrink-0 items-center border-t border-[#c6c6c6] bg-[#f1f1f1] pl-[9px] text-[15px] leading-none text-[#444]">
      <span className="w-[158px] whitespace-nowrap pb-[2px] [word-spacing:1px]">幻灯片 第 1 张，共 1 张</span>
      <svg className="ml-[25px]" width="18" height="15" viewBox="0 0 18 15" fill="none" stroke="#777">
        <path d="M8.500 2.500l-8-1v11l8 1zM9.500 2.500l8-1v11l-8 1zM11 7l2 2 4-6" />
      </svg>
      <span className="ml-[22px] whitespace-nowrap pb-[2px]">中文(中国)</span>

      <div className="ml-auto flex h-full items-center">
        <svg width="13" height="14" viewBox="0 0 13 14" fill="none" stroke="#555">
          <path d="M3 5l3.500-3L10 5M0 8h13M0 10.500h13M0 13h8" />
        </svg>
        <span className="ml-[6px] pb-[2px]">备注</span>
        <svg className="ml-[25px]" width="18" height="17" viewBox="0 0 18 17" fill="#666">
          <path d="M2 1h14a2 2 0 0 1 2 2v8a2 2 0 0 1-2 2H8l-3 4v-4H2a2 2 0 0 1-2-2V3a2 2 0 0 1 2-2z" />
        </svg>
        <span className="ml-[3px] pb-[2px]">批注</span>
        <div className="ml-[24px] flex h-full w-[50px] items-center justify-center bg-[#c6c6c6]">
          <svg width="17" height="17" viewBox="0 0 17 17" fill="none" stroke="#666">
            <path d="M.5.500h16v16H.5zM5 .500v11h11.500M5 11.500h11.500M7.500 3.500h6v5h-6z" />
          </svg>
        </div>
        <div className="flex w-[50px] justify-center">
          <svg width="17" height="17" viewBox="0 0 17 17" fill="none" stroke="#666">
            <path d="M.5 1.500h6v5h-6zM10.500 1.500h6v5h-6zM.5 10.500h6v5h-6zM10.500 10.500h6v5h-6z" />
          </svg>
        </div>
        <div className="flex w-[50px] justify-center">
          <svg width="17" height="17" viewBox="0 0 17 17" fill="none" stroke="#666">
            <path d="M.5 1.500h7l1 1 1-1h7v13h-7l-1 1-1-1h-7zM8.500 2.500v12M2.500 4.500h4M2.500 7.500h4M2.500 10.500h4M10.500 4.500h4M10.500 7.500h4M10.500 10.500h4" />
          </svg>
        </div>
        <div className="flex w-[50px] justify-center">
          <svg width="17" height="17" viewBox="0 0 17 17" fill="none" stroke="#666">
            <path d="M0 .500h17M2.500 .500v10h12v-10M8.500 10.500v5M5 16h7M5 4.500h7" />
          </svg>
        </div>
        <svg className="ml-[12px]" width="10" height="10" stroke="#555"><path d="M0 5h10" /></svg>
        <div className="relative ml-[1px] h-px w-[126px] bg-[#999]">
          <div className="absolute left-[51px] top-[-7px] h-[16px] w-[6px] bg-[#666]" />
          <div className="absolute left-[63px] top-[-3px] h-[7px] w-px bg-[#999]" />
        </div>
        <svg className="ml-[5px]" width="10" height="10" stroke="#555"><path d="M0 5h10M5 0v10" /></svg>
        <span className="ml-[17px] w-[32px] font-['Open_Sans',sans-serif]">83%</span>
        <svg className="ml-[16px] mr-[10px]" width="14" height="14" viewBox="0 0 14 14" fill="none" stroke="#777">
          <path d="M.5.500h13v13H.5zM7 3v3M7 8v3M3 7h3M8 7h3" />
        </svg>
      </div>
    </div>
  );
}

export default function App() {
  const tabs = ["插入", "设计", "切换", "动画", "幻灯片放映", "审阅", "视图", "帮助"];
  return (
    <div className="relative flex h-[986px] w-[1920px] flex-col overflow-hidden bg-[#e6e6e6] font-['Noto_Sans_CJK_SC',sans-serif]">
      <div className="flex h-[38px] shrink-0 items-center bg-[#b7472a] pb-[1px] text-[15px] leading-none text-white">
        <div className="w-[76px] pr-[2px] text-center">文件</div>
        <div className="flex h-full w-[55px] items-center justify-center bg-[#f1f1f1] pr-[1px] text-[#b7472a]">开始</div>
        {tabs.map((t) => (
          <div key={t} className="whitespace-nowrap px-[13.5px]">
            {t}
          </div>
        ))}
        <Lightbulb className="ml-[17px] shrink-0" size={23} strokeWidth={1.25} />
        <span className="ml-[10px]">操作说明搜索</span>
        <div className="ml-auto flex items-center pr-[28px]">
          <svg width="18" height="20" viewBox="0 0 18 20" fill="none" stroke="#fff">
            <circle cx="8" cy="6" r="5" />
            <path d="M.5 19c0-5 3-8 7-8M13 12v8M9 16h8" />
          </svg>
          <span className="ml-[3px]">共享</span>
        </div>
      </div>

      <Ribbon />

      <div className="flex min-h-0 flex-1">
        <div className="flex w-[291px] shrink-0 items-start border-r-2 border-[#c6c6c6] pl-[16px] pt-[20px]">
          <span className="w-[27px] text-[18px] leading-[20px] text-[#d24726]">1</span>
          <div className="h-[131px] w-[224px] border-[3px] border-[#b7472a] bg-white shadow-[inset_0_0_0_1px_#e6e6e6]" />
        </div>
        <div className="flex min-w-0 flex-1 flex-col">
          <div className="h-[42px] shrink-0 pl-[163px] pt-[5px]">
            <HRuler />
          </div>
          <div className="flex items-start pl-[7px]">
            <VRuler />
            <div className="ml-[136px] h-[745px] w-[1322px] shrink-0 border border-[#c6c6c6] bg-white" />
          </div>
          <div className="mt-auto h-[3px] border-t border-[#c6c6c6]" />
        </div>
      </div>

      <StatusBar />
      <ShapesPopup />
      <RedArrow />
      <Watermark />
    </div>
  );
}
